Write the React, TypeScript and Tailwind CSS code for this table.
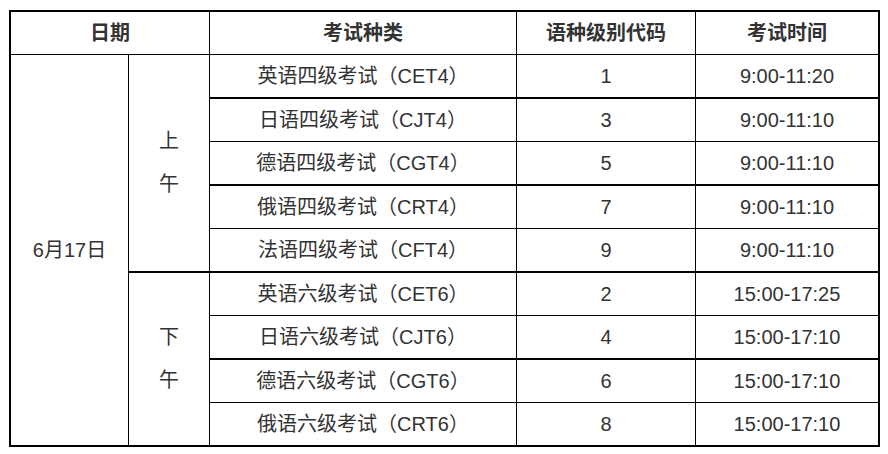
const rows: Array<{ name: string; code: string; time: string }> = [
  { name: "英语四级考试（CET4）", code: "1", time: "9:00-11:20" },
  { name: "日语四级考试（CJT4）", code: "3", time: "9:00-11:10" },
  { name: "德语四级考试（CGT4）", code: "5", time: "9:00-11:10" },
  { name: "俄语四级考试（CRT4）", code: "7", time: "9:00-11:10" },
  { name: "法语四级考试（CFT4）", code: "9", time: "9:00-11:10" },
  { name: "英语六级考试（CET6）", code: "2", time: "15:00-17:25" },
  { name: "日语六级考试（CJT6）", code: "4", time: "15:00-17:10" },
  { name: "德语六级考试（CGT6）", code: "6", time: "15:00-17:10" },
  { name: "俄语六级考试（CRT6）", code: "8", time: "15:00-17:10" }
];

// bottom line of each body row alternates 2px / 1px, the last one is the outer border
const rowBorder = (i: number) =>
  i === rows.length - 1 ? "" : i % 2 === 0 ? "border-b-2" : "border-b";

export default function App() {
  return (
    <div
      className="h-[454px] w-[888px] overflow-hidden bg-white pl-[9px] pt-[10px] text-[20px] text-[#333]"
      style={{ fontFamily: '"Liberation Sans", "Noto Sans CJK SC", sans-serif' }}
    >
      <div className="w-[871px] border-2 border-black">
        <div className="grid grid-cols-[118px_81px_307px_179px_182px] grid-rows-[43px_44px_43px_44px_43px_44px_43px_44px_43px_42px]">
          {/* header */}
          <div className="col-span-2 flex items-center justify-center border-r border-b border-black font-bold">
            日期
          </div>
          <div className="flex items-center justify-center border-r border-b border-black font-bold">
            考试种类
          </div>
          <div className="flex items-center justify-center border-r border-b border-black font-bold">
            语种级别代码
          </div>
          <div className="flex items-center justify-center border-b border-black font-bold">
            考试时间
          </div>

          {/* date column */}
          <div className="col-start-1 row-span-9 row-start-2 flex items-center justify-center border-r border-black">
            6月17日
          </div>
          <div className="col-start-2 row-span-5 row-start-2 flex flex-col items-center justify-center border-r border-b-2 border-black leading-[43px]">
            <span>上</span>
            <span>午</span>
          </div>
          <div className="col-start-2 row-span-4 row-start-7 flex flex-col items-center justify-center border-r border-black leading-[43px]">
            <span>下</span>
            <span>午</span>
          </div>

          {rows.map((row, i) => (
            <div key={row.name} className="contents">
              <div
                className={`col-start-3 flex items-center justify-center border-r border-black ${rowBorder(i)}`}
              >
                {row.name}
              </div>
              <div
                className={`col-start-4 flex items-center justify-center border-r border-black ${rowBorder(i)}`}
              >
                {row.code}
              </div>
              <div className={`col-start-5 flex items-center justify-center border-black ${rowBorder(i)}`}>
                {row.time}
              </div>
            </div>
          ))}
        </div>
      </div>
    </div>
  );
}
